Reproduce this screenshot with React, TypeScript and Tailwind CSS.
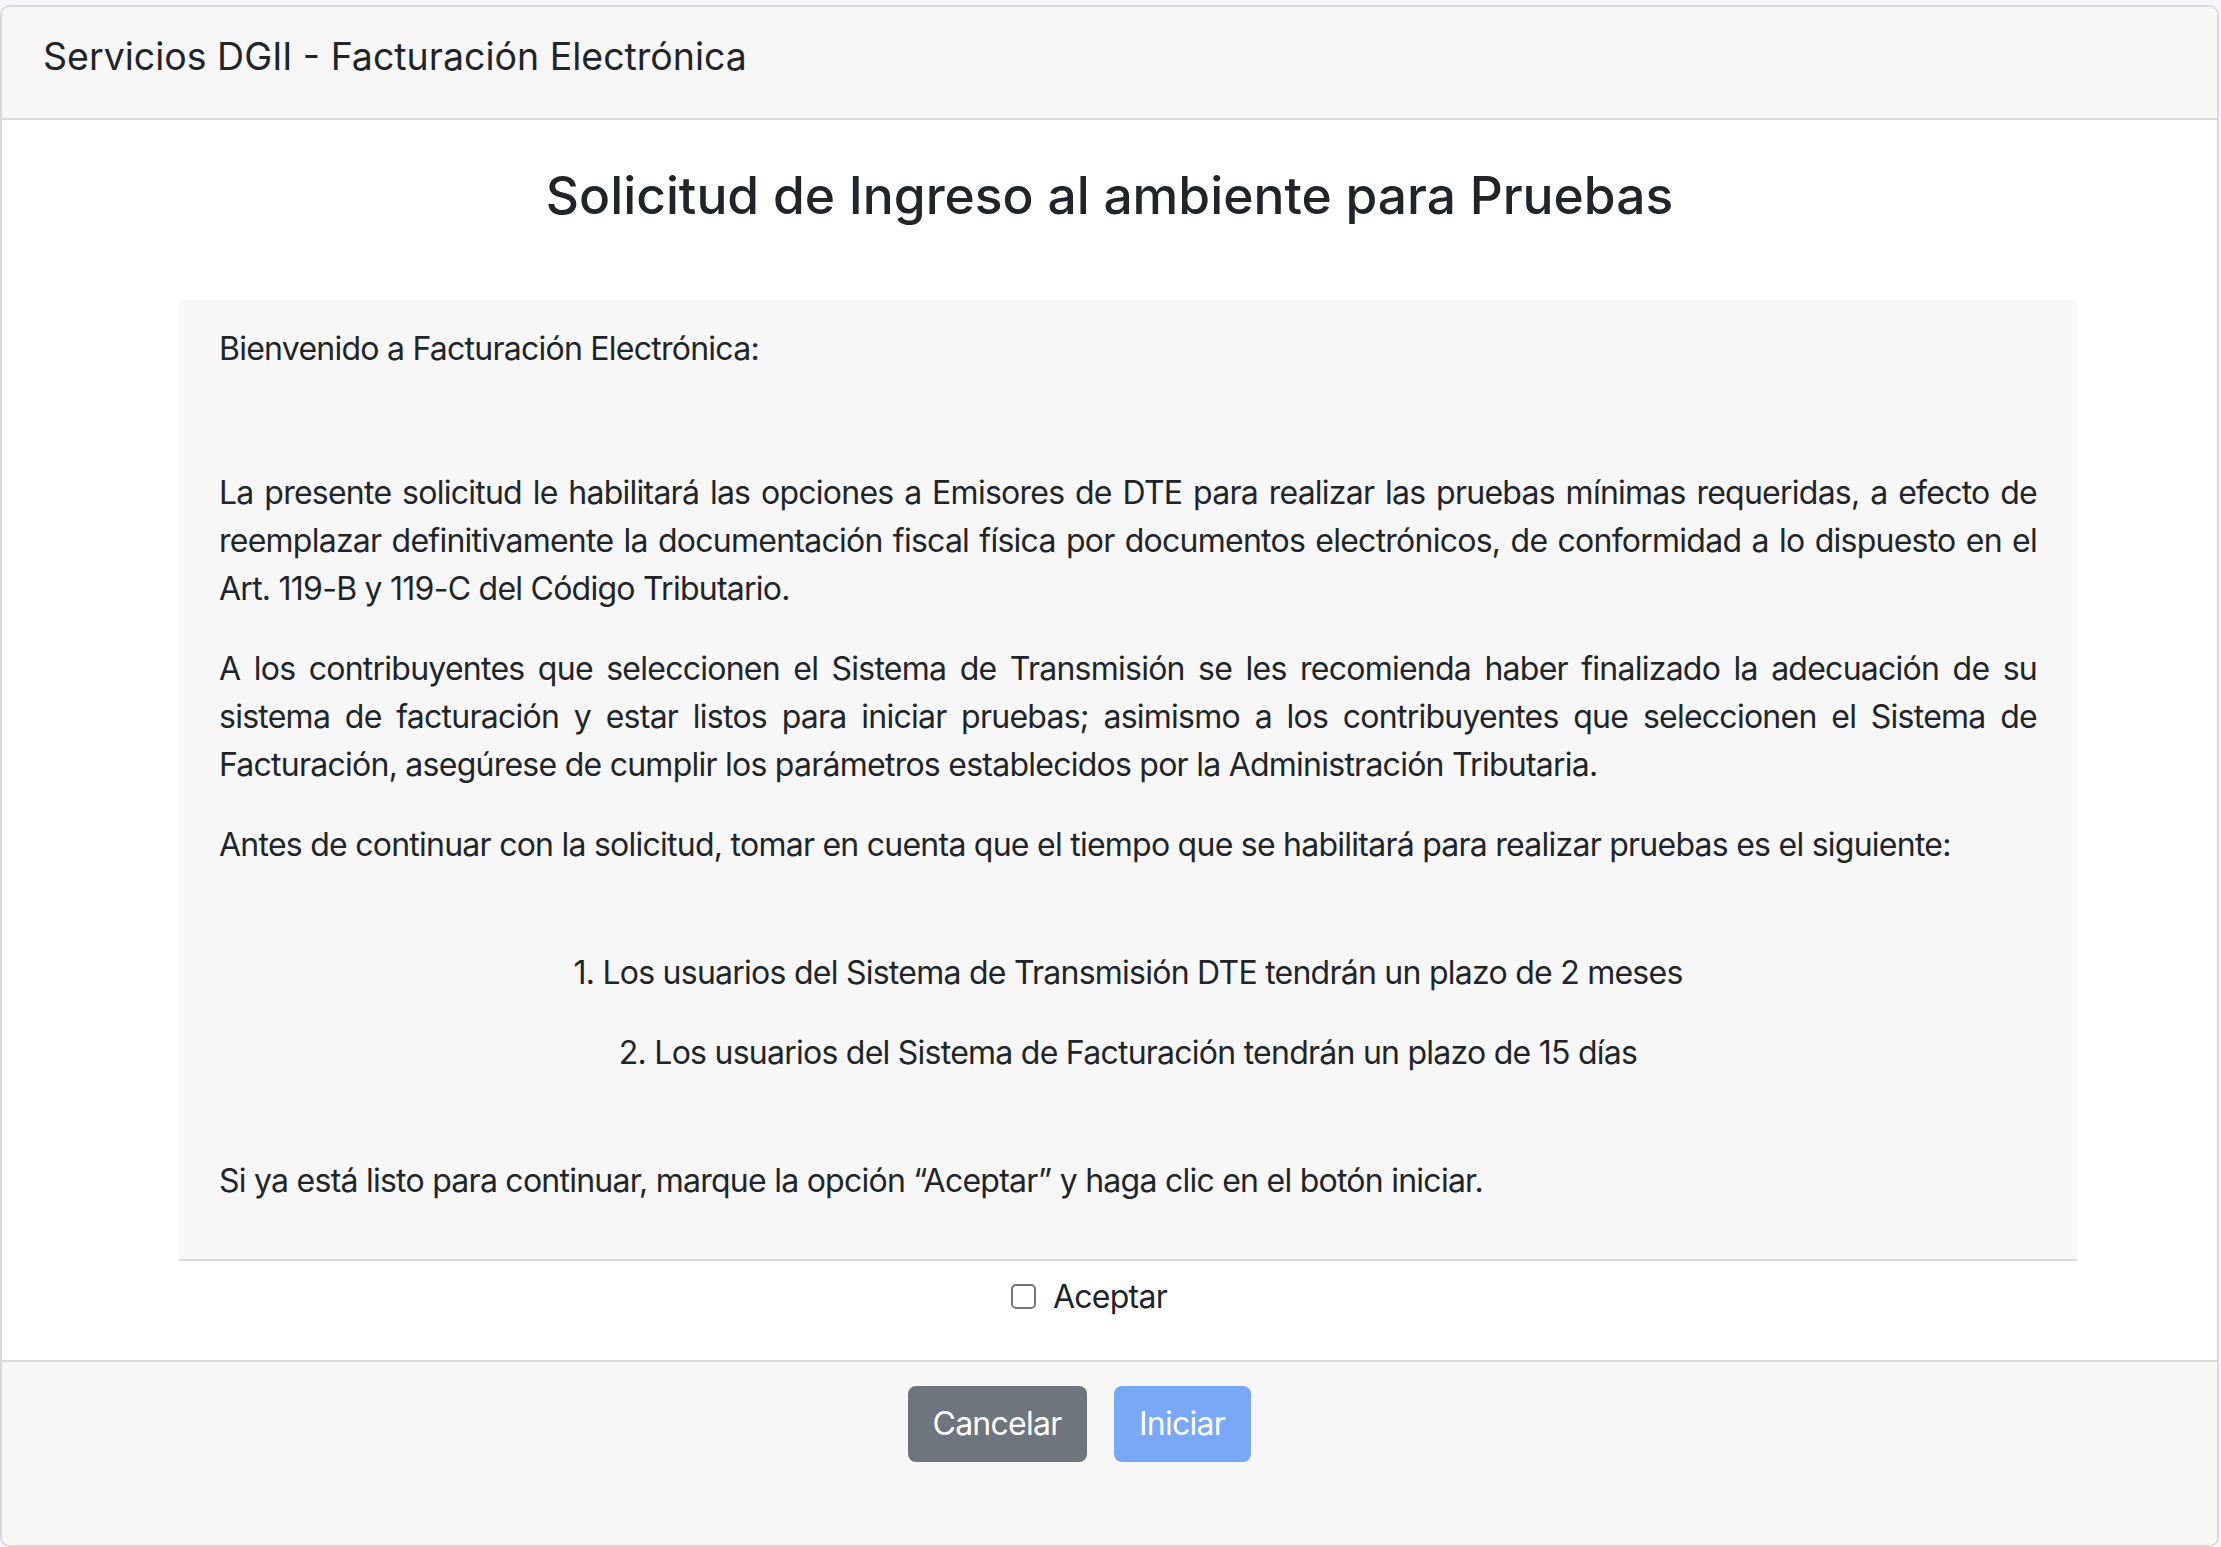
import { useState } from 'react'

const bodyLines = {
  intro: [
    'La presente solicitud le habilitará las opciones a Emisores de DTE para realizar las pruebas mínimas requeridas, a efecto de',
    'reemplazar definitivamente la documentación fiscal física por documentos electrónicos, de conformidad a lo dispuesto en el',
    'Art. 119-B y 119-C del Código Tributario.',
  ],
  sistemas: [
    'A los contribuyentes que seleccionen el Sistema de Transmisión se les recomienda haber finalizado la adecuación de su',
    'sistema de facturación y estar listos para iniciar pruebas; asimismo a los contribuyentes que seleccionen el Sistema de',
    'Facturación, asegúrese de cumplir los parámetros establecidos por la Administración Tributaria.',
  ],
}

// Each visual line is its own block so the justified paragraph keeps its breaks
function JustifiedParagraph({ lines, className }: { lines: string[]; className?: string }) {
  return (
    <div className={className}>
      {lines.map((line, index) => (
        <span
          key={index}
          className={
            index < lines.length - 1
              ? 'block text-justify [text-align-last:justify]'
              : 'block text-left'
          }
        >
          {line}
        </span>
      ))}
    </div>
  )
}

function App() {
  const [accepted, setAccepted] = useState(false)

  return (
    <div className="flex h-screen flex-col overflow-hidden bg-[#f5f7fa] pt-[5px] font-['Inter',sans-serif] text-[#212529]">
      <div className="mr-[2px] flex flex-1 flex-col overflow-hidden rounded-[10px] border-2 border-[#d9d9d9] bg-white">
        <header className="h-[113px] shrink-0 border-b-2 border-[#d9d9d9] bg-[#f7f7f7] px-[41px] pt-[27px] text-[37.5px] leading-[1.2]">
          Servicios DGII - Facturación Electrónica
        </header>

        <main className="shrink-0 pb-[39px]">
          <h1 className="mt-[45px] text-center text-[51.5px] font-medium leading-[1.2]">
            Solicitud de Ingreso al ambiente para Pruebas
          </h1>

          <section className="ml-[177px] mt-[73px] w-[1898px] rounded-t-[6px] border-b-2 border-[#d9d9d9] bg-[#f7f7f7] px-[40px] pb-[22px] pt-[25px] text-[32px] leading-[48px] tracking-[-0.75px]">
            <p className="mb-[96px]">Bienvenido a Facturación Electrónica:</p>

            <JustifiedParagraph lines={bodyLines.intro} className="mb-[32px]" />
            <JustifiedParagraph lines={bodyLines.sistemas} className="mb-[32px]" />

            <p className="mb-[80px]">
              Antes de continuar con la solicitud, tomar en cuenta que el tiempo que se habilitará para realizar pruebas es el siguiente:
            </p>

            <p className="mb-[32px] text-center">
              1. Los usuarios del Sistema de Transmisión DTE tendrán un plazo de 2 meses
            </p>
            <p className="mb-[80px] text-center">
              2. Los usuarios del Sistema de Facturación tendrán un plazo de 15 días
            </p>

            <p className="mb-[32px]">
              Si ya está listo para continuar, marque la opción “Aceptar” y haga clic en el botón iniciar.
            </p>
          </section>

          <label className="mt-[12px] flex cursor-pointer items-center justify-center gap-[17px] pr-[41px] text-[32px] leading-[48px] tracking-[-0.75px]">
            <input
              type="checkbox"
              checked={accepted}
              onChange={(event) => setAccepted(event.target.checked)}
              className="h-[25px] w-[25px] appearance-none rounded-[5px] border-2 border-[#767676] bg-white checked:border-[#0d6efd] checked:bg-[#0d6efd]"
            />
            <span>Aceptar</span>
          </label>
        </main>

        <footer className="flex flex-1 justify-center gap-[27px] border-t-2 border-[#d9d9d9] bg-[#f7f7f7] pr-[61px] pt-[24px]">
          <button
            type="button"
            className="h-[76px] w-[179px] rounded-[8px] bg-[#6f757e] text-[32px] leading-[48px] tracking-[-0.75px] text-white"
          >
            Cancelar
          </button>
          <button
            type="button"
            disabled={!accepted}
            className="h-[76px] w-[137px] rounded-[8px] bg-[#0d6efd] text-[32px] leading-[48px] tracking-[-0.75px] text-white disabled:bg-[#79a8f8]"
          >
            Iniciar
          </button>
        </footer>
      </div>
    </div>
  )
}

export default App
